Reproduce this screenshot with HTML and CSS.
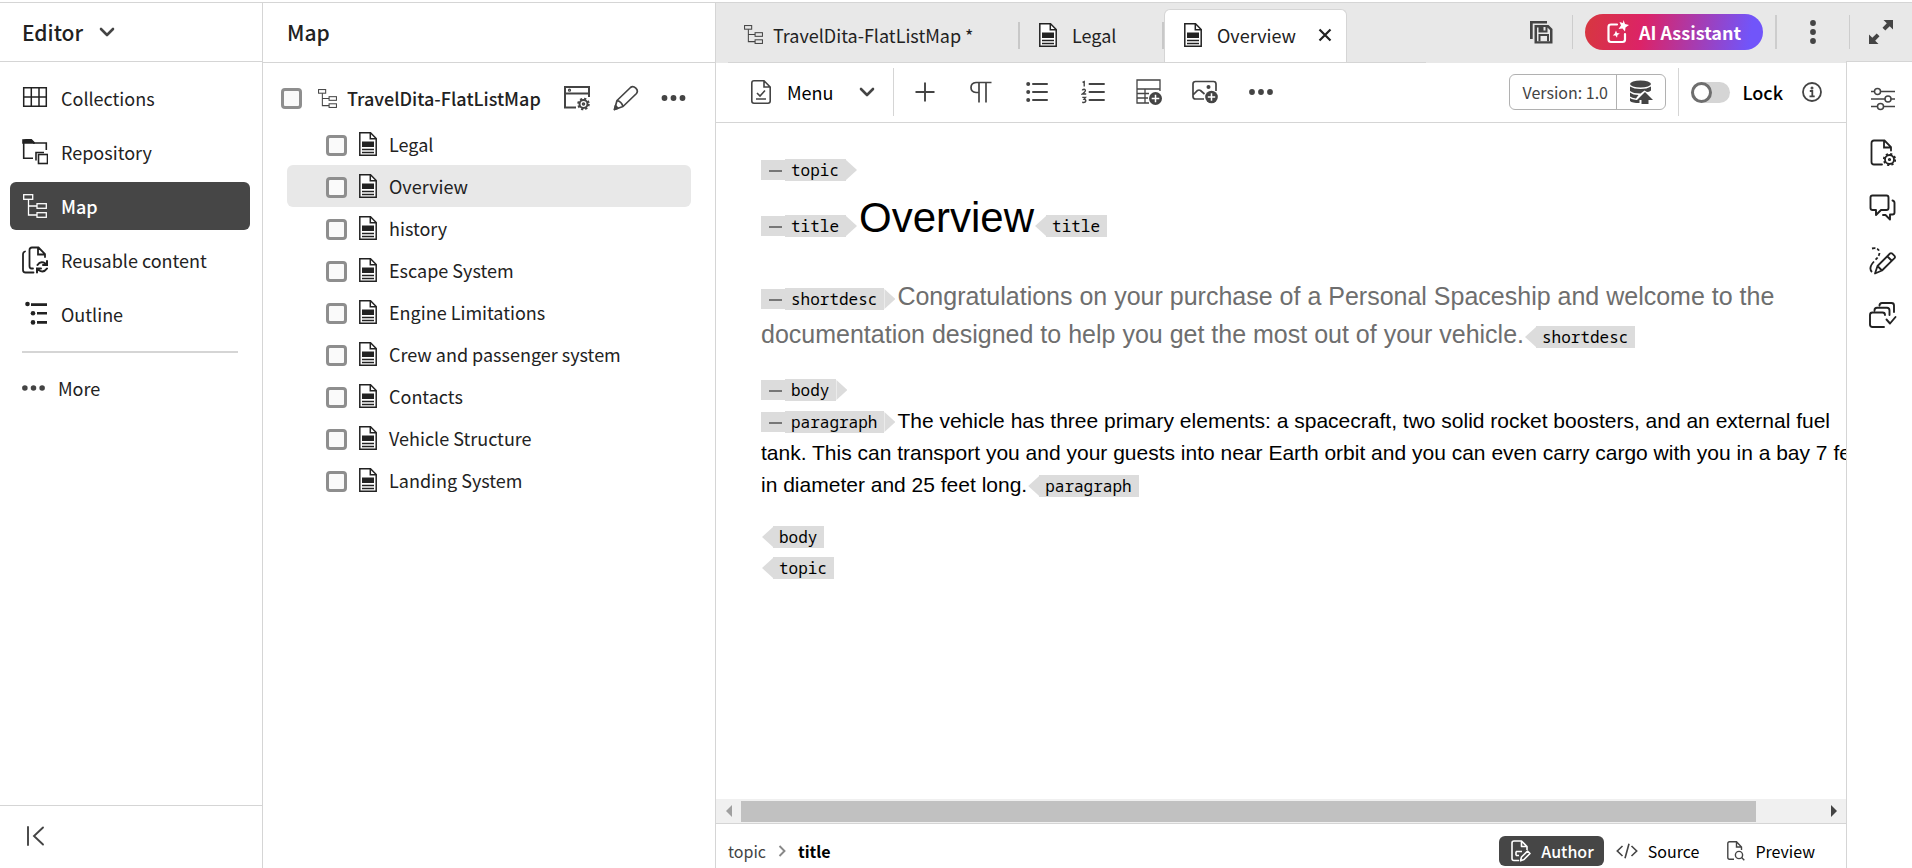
FILE: index.html
```html
<!DOCTYPE html>
<html lang="en">
<head>
<meta charset="utf-8">
<title>Editor</title>
<link rel="stylesheet" href="styles.css">
</head>
<body>
<svg class="sprite" aria-hidden="true">
  <symbol id="tree" viewBox="0 0 24 24"><g fill="none" stroke="currentColor" stroke-width="1.3"><rect x=".7" y=".7" width="9" height="4.6"/><rect x="14" y="9.7" width="9.3" height="4.6"/><rect x="14" y="18.7" width="9.3" height="4.6"/><path d="M5.5 5.3V21H14M5.5 12H14"/></g></symbol>
  <symbol id="doc" viewBox="0 0 18 24"><path d="M.8.8H11.500L17.200 6.500V23.200H.8Z" fill="#fff" stroke="#222" stroke-width="1.500"/><path d="M11.300.8V6.700H17.200" fill="none" stroke="#222" stroke-width="1.500"/><path d="M3 9.500H15V15H3Z" fill="#222"/><path d="M3 17.500H15M3 20.500H15" stroke="#222" stroke-width="1.300"/></symbol>
  <symbol id="chev" viewBox="0 0 16 10"><path d="M2 2L8 8L14 2" fill="none" stroke="currentColor" stroke-width="2.600" stroke-linecap="round" stroke-linejoin="round"/></symbol>
  <symbol id="dots" viewBox="0 0 24 6"><g fill="currentColor"><circle cx="3" cy="3" r="2.900"/><circle cx="12" cy="3" r="2.900"/><circle cx="21" cy="3" r="2.900"/></g></symbol>
</svg>
<div class="app">
  <aside class="nav">
    <header class="nav-head"><button class="product">Editor <svg width="16" height="10"><use href="#chev"/></svg></button></header>
    <nav class="nav-list">
      <button class="nav-item"><svg width="26" height="26" viewBox="0 0 26 26" fill="none" stroke="currentColor" stroke-width="1.500"><path d="M1.700 2.700H24.300V21.300H1.700ZM9.300 2.700V21.300M17 2.700V21.300M1.700 12H24.300"/></svg>Collections</button>
      <button class="nav-item"><svg width="26" height="26" viewBox="0 0 26 26" fill="none" stroke="currentColor" stroke-width="1.600"><path d="M1 1L9 .5L12 3.500V4H1Z" fill="currentColor"/><path d="M1.700 3V19.200H11M11 4H24.300V11M14 21.500V13.500H22"/><rect x="16.500" y="15.500" width="9" height="9"/></svg>Repository</button>
      <button class="nav-item active"><svg width="26" height="24"><use href="#tree"/></svg>Map</button>
      <button class="nav-item"><svg width="26" height="28" viewBox="0 0 26 28" fill="none" stroke="currentColor" stroke-width="1.800" stroke-linecap="round"><path d="M3 5.500Q1 6 1 8.500V24Q1 26.500 3.500 26.500H11.500M11 22.500H9.500Q7.500 22.500 7.500 20V4Q7.500 1.500 10 1.500H16.500L23 8V11M16 2V8.500H23"/><path d="M15.500 19Q18.500 14.500 23.500 17.500M25 15V19H21M25 22.500Q21.500 27.500 16.500 24M15 26.500V22.500H19" stroke-width="2"/></svg>Reusable content</button>
      <button class="nav-item"><svg width="26" height="26" viewBox="0 0 26 26" fill="currentColor"><circle cx="5.500" cy="3" r="2.300"/><circle cx="11" cy="12.200" r="2.300"/><circle cx="11" cy="21.400" r="2.300"/><path d="M9 2.200H25V5H9ZM15 10.900H25V13.600H15ZM15 20H25V22.800H15Z"/></svg>Outline</button>
      <hr class="nav-rule">
      <button class="nav-item more"><svg width="23" height="6"><use href="#dots"/></svg>More</button>
    </nav>
    <footer class="nav-foot"><button class="icon-btn" aria-label="Collapse"><svg width="20" height="20" viewBox="0 0 20 20" fill="none" stroke="#444" stroke-width="1.900" stroke-linecap="round"><path d="M2 1V19M17 1.500L8 10L17 18.500"/></svg></button></footer>
  </aside>

  <section class="map">
    <h2 class="map-head">Map</h2>
    <div class="root-row">
      <input class="check" type="checkbox" id="root"><svg width="19" height="19" class="root-icon"><use href="#tree"/></svg>
      <label class="root-name" for="root">TravelDita-FlatListMap</label>
      <button class="icon-btn" aria-label="Map settings"><svg width="28" height="26" viewBox="0 0 28 26" fill="none" stroke="#444" stroke-width="2"><path d="M13 22.500H2V2H26V12M2 8.500H26"/><circle cx="6.500" cy="5.200" r=".6"/><circle cx="20.500" cy="19" r="4"/><circle cx="20.500" cy="19" r="5.300" stroke-width="2" stroke-dasharray="2.200 1.960"/><circle cx="20.500" cy="19" r=".8"/></svg></button>
      <button class="icon-btn" aria-label="Edit"><svg width="26" height="26" viewBox="0 0 26 26" fill="none" stroke="#444" stroke-width="1.700" stroke-linejoin="round"><path d="M1.500 24.500L4 15.500L17.500 2.500Q20 .5 22.800 3.200Q25.500 6 23.500 8.500L10 21.500ZM4 15.500Q8.500 16.500 10 21.500"/><path d="M1.500 24.500L2.500 20.500L5 23.300Z" fill="#444"/></svg></button>
      <button class="icon-btn" aria-label="Options"><svg width="25" height="6"><use href="#dots"/></svg></button>
    </div>
    <ul class="tree">
      <li class="node"><input class="check" type="checkbox" id="n1"><label for="n1"><svg width="18" height="24"><use href="#doc"/></svg>Legal</label></li>
      <li class="node selected"><input class="check" type="checkbox" id="n2"><label for="n2"><svg width="18" height="24"><use href="#doc"/></svg>Overview</label></li>
      <li class="node"><input class="check" type="checkbox" id="n3"><label for="n3"><svg width="18" height="24"><use href="#doc"/></svg>history</label></li>
      <li class="node"><input class="check" type="checkbox" id="n4"><label for="n4"><svg width="18" height="24"><use href="#doc"/></svg>Escape System</label></li>
      <li class="node"><input class="check" type="checkbox" id="n5"><label for="n5"><svg width="18" height="24"><use href="#doc"/></svg>Engine Limitations</label></li>
      <li class="node"><input class="check" type="checkbox" id="n6"><label for="n6"><svg width="18" height="24"><use href="#doc"/></svg>Crew and passenger system</label></li>
      <li class="node"><input class="check" type="checkbox" id="n7"><label for="n7"><svg width="18" height="24"><use href="#doc"/></svg>Contacts</label></li>
      <li class="node"><input class="check" type="checkbox" id="n8"><label for="n8"><svg width="18" height="24"><use href="#doc"/></svg>Vehicle Structure</label></li>
      <li class="node"><input class="check" type="checkbox" id="n9"><label for="n9"><svg width="18" height="24"><use href="#doc"/></svg>Landing System</label></li>
    </ul>
  </section>

  <main class="editor">
    <div class="tabbar">
      <div class="tabs">
        <button class="tab tab-map"><svg width="19" height="19"><use href="#tree"/></svg>TravelDita-FlatListMap *</button>
        <button class="tab tab-legal"><svg width="18" height="24"><use href="#doc"/></svg>Legal</button>
        <div class="tab tab-current"><svg width="18" height="24"><use href="#doc"/></svg>Overview<button class="icon-btn close" aria-label="Close tab"><svg width="14" height="14" viewBox="0 0 14 14" fill="none" stroke="#222" stroke-width="2.200"><path d="M1.500 1.500L12.500 12.500M12.500 1.500L1.500 12.500"/></svg></button></div>
      </div>
      <div class="top-actions">
        <button class="icon-btn act-save" aria-label="Save all"><svg width="24" height="24" viewBox="0 0 24 24"><path d="M1 1H18V3.500H3.700V19H1Z" fill="#444"/><path d="M5.500 5H19.500L23.500 9V23.500H5.500Z" fill="#444"/><path d="M8 7.500H9.500V12.500H18.500V7.500L21 10V21.200H8Z" fill="#e8e8e8"/><path d="M14.500 7H16.500V10.500H14.500Z" fill="#e8e8e8"/><path d="M9.500 14H20V21.200H18V16H11.500V21.200H9.500Z" fill="#444"/></svg></button>
        <div class="act-ai"><button class="ai"><svg width="22" height="24" viewBox="0 0 22 24" fill="none" stroke="#fff" stroke-width="2.200" stroke-linecap="round"><path d="M10 4.500H4Q1.500 4.500 1.500 7V19.500Q1.500 22 4 22H15.500Q18 22 18 19.500V14"/><path d="M16.500 0L18 4L22 5L18.500 7.500L18 11.500L15.500 8.500L11.500 9L14 5.500L12.500 2L16 3ZM9 10.500L10 13L12.800 13.500L10.500 15L10 17.800L8.500 15.500L5.800 15.500L7.800 13.500Z" fill="#fff" stroke="none"/></svg>AI Assistant</button></div>
        <button class="icon-btn act-more" aria-label="More"><svg width="6" height="24" viewBox="0 0 6 24" fill="#444"><circle cx="3" cy="3" r="2.900"/><circle cx="3" cy="12" r="2.900"/><circle cx="3" cy="21" r="2.900"/></svg></button>
        <button class="icon-btn act-full" aria-label="Full screen"><svg width="26" height="26" viewBox="0 0 26 26" fill="#444"><path d="M15.500 1H25V10.500L21.700 7.200L17.300 11.500L14.500 8.700L18.800 4.300ZM10.500 25H1V15.500L4.300 18.800L8.700 14.500L11.500 17.300L7.200 21.700Z"/></svg></button>
      </div>
    </div>

    <div class="work">
      <div class="pane">
        <div class="toolbar">
          <button class="menu-btn"><svg width="20" height="24" viewBox="0 0 20 24" fill="none" stroke="#444" stroke-width="1.600"><path d="M3 .8H13L19.200 7V21Q19.200 23.200 17 23.200H3Q.8 23.200 .8 21V3Q.8.8 3 .8ZM13 1V7H19M6 13L9 16L14 10.500M5 19H15"/></svg><span>Menu</span><svg width="16" height="10"><use href="#chev"/></svg></button>
          <div class="tools">
            <button class="icon-btn" aria-label="Insert element"><svg width="20" height="20" viewBox="0 0 20 20" stroke="#444" stroke-width="1.900"><path d="M10 .5V19.500M.5 10H19.500"/></svg></button>
            <button class="icon-btn" aria-label="Paragraph"><svg width="22" height="22" viewBox="0 0 22 22" fill="none" stroke="#444" stroke-width="1.700"><path d="M21.500 1.500H6Q1 2 1 6.500Q1 11 6 11.500H9M9 1.500V21.500M16 1.500V21.500"/></svg></button>
            <button class="icon-btn" aria-label="Bulleted list"><svg width="22" height="22" viewBox="0 0 22 22"><g fill="#444"><circle cx="2.200" cy="3" r="2"/><circle cx="2.200" cy="11" r="2"/><circle cx="2.200" cy="19" r="2"/></g><path d="M7 3H21M7 11H21M7 19H21" stroke="#444" stroke-width="2" stroke-linecap="round"/></svg></button>
            <button class="icon-btn" aria-label="Numbered list"><svg width="24" height="24" viewBox="0 0 24 24" fill="none" stroke="#444"><path d="M8.500 4H23M8.500 12H23M8.500 20H23" stroke-width="1.900" stroke-linecap="round"/><path d="M1.500 2.300L3.200 1.500V6.500M1.300 10.300Q1.500 9.300 3 9.300Q4.700 9.500 4.300 11Q3.500 12.500 1.300 14H5.200M1.300 17.400H4.500L3 19.300Q5 19.500 4.800 21Q4.300 23 1.200 22.300" stroke-width="1.400"/></svg></button>
            <button class="icon-btn" aria-label="Insert table"><svg width="26" height="26" viewBox="0 0 26 26"><path d="M13 24H1V1H24V12M1 10H24M1 14.500H13M1 19H12M9 10V24" fill="none" stroke="#444" stroke-width="1.300"/><circle cx="19.500" cy="19.500" r="6.500" fill="#444"/><path d="M19.500 15.700V23.300M15.700 19.500H23.300" stroke="#fff" stroke-width="1.500"/></svg></button>
            <button class="icon-btn" aria-label="Insert image"><svg width="26" height="24" viewBox="0 0 26 24"><path d="M12 19H3.500Q1 19 1 16.500V4Q1 1.500 3.500 1.500H21.500Q24 1.500 24 4V11M1 15L5.500 10.500Q7 9.500 8.500 10.500L12.500 14" fill="none" stroke="#444" stroke-width="1.700"/><circle cx="16.500" cy="7" r="2" fill="#444"/><circle cx="19.500" cy="17" r="6.300" fill="#444"/><path d="M19.500 13.300V20.700M15.800 17H23.200" stroke="#fff" stroke-width="1.500"/></svg></button>
            <button class="icon-btn" aria-label="More tools"><svg width="24" height="6"><use href="#dots"/></svg></button>
          </div>
          <div class="version"><button class="ver-name">Version: 1.0</button><button class="ver-save" aria-label="Save as new version"><svg width="24" height="24" viewBox="0 0 24 24" fill="#444"><ellipse cx="11.500" cy="4" rx="10.500" ry="3.500"/><path d="M1 6.500Q5 9 11.500 9T22 6.500V10.500Q20 12 18 12L15.500 10.500L11.500 13.500Q4 13.500 1 11ZM1 12.500Q4 15 9.500 15L7 18.500Q3 18 1 16.500ZM1 18Q4 20 10.500 20V23Q3 23 1 21ZM16 12L24 20H19.500V24H12.500V20H8Z"/></svg></button></div>
          <div class="lock"><input class="switch" type="checkbox" role="switch" id="lock"><label for="lock">Lock</label><button class="icon-btn" aria-label="Lock info"><svg width="20" height="20" viewBox="0 0 20 20" fill="none" stroke="#444" stroke-width="1.800"><circle cx="10" cy="10" r="9"/><path d="M7.800 9H10.300V14M7.500 14.300H12.700"/><circle cx="10" cy="6" r=".6"/></svg></button></div>
        </div>

        <div class="canvas">
          <article class="topic">
            <div class="line"><span class="tag open"><i class="fold"></i><code>topic</code></span></div>
            <h1 class="title"><span class="tag open"><i class="fold"></i><code>title</code></span>Overview<span class="tag end"><code>title</code></span></h1>
            <p class="shortdesc"><span class="tag open"><i class="fold"></i><code>shortdesc</code></span>Congratulations on your purchase of a Personal Spaceship and welcome to the documentation designed to help you get the most out of your vehicle.<span class="tag end"><code>shortdesc</code></span></p>
            <div class="line"><span class="tag open"><i class="fold"></i><code>body</code></span></div>
            <p class="para"><span class="tag open"><i class="fold"></i><code>paragraph</code></span>The vehicle has three primary elements: a spacecraft, two solid rocket boosters, and an external fuel tank. This can transport you and your guests into near Earth orbit and you can even carry cargo with you in a bay 7 feet in diameter and 25 feet long.<span class="tag end"><code>paragraph</code></span></p>
            <div class="line"><span class="tag end"><code>body</code></span></div>
            <div class="line"><span class="tag end"><code>topic</code></span></div>
          </article>
        </div>

        <div class="scroll">
          <button class="icon-btn" aria-label="Scroll left"><svg width="8" height="12" viewBox="0 0 8 12" fill="#a0a0a0"><path d="M7 0V12L1 6Z"/></svg></button>
          <div class="track"><div class="thumb"></div></div>
          <button class="icon-btn" aria-label="Scroll right"><svg width="8" height="12" viewBox="0 0 8 12" fill="#444"><path d="M1 0V12L7 6Z"/></svg></button>
        </div>

        <footer class="status">
          <nav class="crumbs"><a href="#topic">topic</a><svg width="8" height="12" viewBox="0 0 8 12" fill="none" stroke="#888" stroke-width="1.900"><path d="M1.500 1L6.500 6L1.500 11"/></svg><a href="#title" class="here">title</a></nav>
          <div class="modes">
            <button class="mode on"><svg width="20" height="22" viewBox="0 0 20 22" fill="none" stroke="currentColor" stroke-width="1.600" stroke-linejoin="round"><path d="M8 20.500H3Q1 20.500 1 18.500V3Q1 1 3 1H10.500L16 6.500V10M10.500 1V6.500H16M5 11.500H11M5 15.500H8M5 11.500V15.500M9.500 20.800L10.500 17L16.500 11.200L19 13.500L13 19.500Z"/></svg>Author</button>
            <button class="mode"><svg width="22" height="16" viewBox="0 0 22 16" fill="none" stroke="#444" stroke-width="1.600"><path d="M6.500 3L1.300 8L6.500 13M15.500 3L20.700 8L15.500 13M13 .8L9 15.200"/></svg>Source</button>
            <button class="mode preview"><svg width="18" height="20" viewBox="0 0 18 20" fill="none" stroke="#444" stroke-width="1.400"><path d="M7 18.300H2.500Q.8 18.300 .8 16.500V2.500Q.8.8 2.500.8H9.500L14.500 6V9M9.500.8V6H14.500"/><circle cx="12" cy="14" r="3.600"/><path d="M14.600 16.600L17.300 19.300"/></svg>Preview</button>
          </div>
        </footer>
      </div>

      <aside class="rail">
        <button class="icon-btn" aria-label="Content properties"><svg width="26" height="24" viewBox="0 0 26 24" fill="none" stroke="#444" stroke-width="1.500"><path d="M1 4.500H4.500M10.500 4.500H25M1 12H15M21 12H25M1 19.500H7.500M13.500 19.500H25"/><circle cx="7.500" cy="4.500" r="3"/><circle cx="18" cy="12" r="3"/><circle cx="10.500" cy="19.500" r="3"/></svg></button>
        <button class="icon-btn" aria-label="File properties"><svg width="26" height="28" viewBox="0 0 26 28" fill="none" stroke="#222" stroke-width="1.800" stroke-linecap="round"><path d="M12 25.500H4Q1.500 25.500 1.500 23V4Q1.500 1.500 4 1.500H14.500L21 8V11.500M14 2V8.500H21"/><circle cx="19.500" cy="20.500" r="4.500"/><circle cx="19.500" cy="20.500" r="5.700" stroke-width="1.800" stroke-linecap="butt" stroke-dasharray="2.200 2.280"/><circle cx="19.500" cy="20.500" r=".7"/></svg></button>
        <button class="icon-btn" aria-label="Comments"><svg width="27" height="27" viewBox="0 0 27 27" fill="none" stroke="#222" stroke-width="1.900" stroke-linejoin="round" stroke-linecap="round"><path d="M3.500 1.500H17.500Q19.500 1.500 19.500 3.500V14Q19.500 16 17.500 16H12L7 21V16H3.500Q1.500 16 1.500 14V3.500Q1.500 1.500 3.500 1.500ZM23.500 6.500Q25.500 7 25.500 9V18.500Q25.500 20.500 23.500 20.500H21V25.500L16.500 21H14"/></svg></button>
        <button class="icon-btn" aria-label="Suggestions"><svg width="27" height="28" viewBox="0 0 27 28" fill="none" stroke="#222" stroke-width="1.800" stroke-linejoin="round"><path d="M6 26.500L8.500 19L21 6.500Q22 5.500 23.500 6.800L25.500 8.800Q26.500 10 25.500 11.200L13 23.500ZM8.500 19L13 23.500M18.500 9.500L22.500 13.500"/><path d="M3 1.500Q10 0 10.500 6Q10 10 5.500 13.500" stroke-dasharray="3 2"/><path d="M5 14.500Q-1 21 3 25"/></svg></button>
        <button class="icon-btn" aria-label="Tasks"><svg width="28" height="27" viewBox="0 0 28 27" fill="none" stroke="#222" stroke-width="1.900" stroke-linejoin="round" stroke-linecap="round"><path d="M15 25H3.500Q1 25 1 22.500V13Q1 10.500 3.500 10.500H13.500Q16 10.500 16 13M5.500 8.500Q5.500 5.700 8 5.700H18Q20.500 5.700 20.500 8.500V13M10.500 3.500Q10.500 1 13 1H22.500Q25 1 25 3.500V10M17.500 17.500L21 21.500L26.500 15"/></svg></button>
      </aside>
    </div>
  </main>
</div>
</body>
</html>
```
FILE: styles.css
```css
* { box-sizing: border-box; }
body {
  margin: 0;
  color: #222;
  background: #fff;
  font: 18px/24px "Noto Sans CJK SC", "Noto Sans", sans-serif;
}
button {
  font: inherit;
  color: inherit;
  background: none;
  border: 0;
  padding: 0;
  display: flex;
  align-items: center;
  white-space: nowrap;
}
svg { display: block; flex: none; }
.sprite { position: absolute; width: 0; height: 0; }
.icon-btn { justify-content: center; color: #444; flex: none; }

.app {
  display: grid;
  grid-template-columns: 263px 453px minmax(0, 1fr);
  height: 100vh;
  padding-top: 2px;
}
.app > * { border-top: 1px solid #d5d5d5; }

/* Left navigation */
.nav {
  display: flex;
  flex-direction: column;
  border-right: 1px solid #d5d5d5;
}
.nav-head {
  height: 59px;
  padding: 0 22px;
  display: flex;
  border-bottom: 1px solid #d5d5d5;
}
.product { gap: 16px; font-size: 21px; font-weight: 500; }
.product svg { color: #444; }
.nav-list {
  display: flex;
  flex-direction: column;
  gap: 6px;
  padding: 12px 12px 0 10px;
}
.nav-item { height: 48px; padding-left: 12px; gap: 13px; border-radius: 6px; }
.nav-item.active { background: #464646; color: #fff; font-weight: 500; }
.nav-item.more svg { color: #444; }
.nav-rule {
  height: 2px;
  width: auto;
  margin: 7px 12px 5px;
  border: 0;
  background: #d5d5d5;
}
.nav-foot {
  margin-top: auto;
  height: 63px;
  padding: 0 0 3px 26px;
  display: flex;
  border-top: 1px solid #d5d5d5;
}

/* Map panel */
.map { border-right: 1px solid #d5d5d5; }
.map-head {
  margin: 0;
  height: 60px;
  padding-left: 24px;
  font-size: 21px;
  font-weight: 500;
  line-height: 58px;
  border-bottom: 1px solid #d5d5d5;
}
.check {
  appearance: none;
  flex: none;
  width: 21px;
  height: 21px;
  margin: 0;
  border: 3px solid #8e8e8e;
  border-radius: 4px;
  background: #fafafa;
}
.root-row {
  display: flex;
  align-items: center;
  height: 50px;
  margin-top: 10px;
  padding: 0 29px 0 18px;
  gap: 22px;
}
.root-icon { margin: 0 -12px 0 -6px; color: #444; }
.root-name {
  flex: 1;
  overflow: hidden;
  white-space: nowrap;
  font-weight: 500;
}
.tree { list-style: none; margin: 0; padding: 0 24px; }
.node {
  display: flex;
  align-items: center;
  gap: 12px;
  height: 42px;
  padding: 2px 0 0 39px;
  border-radius: 6px;
}
.node.selected { background: #e8e8e8; }
.node label { display: flex; gap: 12px; align-items: center; padding-bottom: 2px; }

/* Tab bar */
.editor { display: flex; flex-direction: column; }
.tabbar {
  display: flex;
  justify-content: space-between;
  height: 60px;
  background: #e8e8e8;
}
.tabs {
  display: flex;
  align-items: flex-end;
  flex: none;
  width: 698px;
  margin-left: 12px;
  border-bottom: 1px solid #d5d5d5;
}
.tab { display: flex; align-items: center; height: 53px; padding-bottom: 2px; white-space: nowrap; }
.tab-map { gap: 10px; width: 292px; padding-left: 16px; }
.tab-map svg { color: #444; }
.tab-legal { gap: 15px; flex: none; width: 144px; padding-left: 19px; }
.tab-map, .tab-legal {
  background: linear-gradient(#c8c8c8, #c8c8c8) no-repeat right center / 2px 27px;
}
.tab-current {
  gap: 15px;
  height: 53px;
  width: 183px;
  padding: 0 14px 2px 19px;
  background: #fff;
  border: solid #d5d5d5;
  border-width: 1px 1px 0;
  border-radius: 6px 6px 0 0;
}
.close { margin-left: auto; }
.top-actions { display: flex; align-items: center; flex: none; padding-bottom: 3px; }
.top-actions > * { height: 34px; display: flex; align-items: center; }
.act-save { padding-right: 19px; }
.act-ai {
  border: solid #cdcdcd;
  border-width: 0 2px 0 1px;
  padding: 0 12px;
}
.act-more { width: 73px; border-right: 1px solid #cdcdcd; }
.act-full { width: 62px; }
.ai {
  gap: 10px;
  height: 36px;
  width: 178px;
  justify-content: center;
  border-radius: 18px;
  color: #fff;
  font-weight: 700;
  background: linear-gradient(100deg, #d7373f 0%, #dc2367 33%, #7155fa 92%);
}

/* Work area */
.work { display: flex; flex: 1; min-height: 0; }
.pane { display: flex; flex-direction: column; flex: 1; min-width: 0; }
.toolbar {
  display: flex;
  align-items: center;
  flex: none;
  height: 60px;
  padding-bottom: 1px;
  border-bottom: 1px solid #d5d5d5;
}
.menu-btn {
  height: 48px;
  padding: 0 18px 0 35px;
  gap: 25px;
  border-right: 1px solid #d5d5d5;
}
.menu-btn span { margin-left: -9px; color: #000; }
.menu-btn svg { color: #444; }
.tools { display: flex; flex: 1; padding-left: 3px; }
.tools .icon-btn { width: 56px; height: 48px; }
.version {
  display: flex;
  height: 36px;
  margin-right: 12px;
  border: 1px solid #b1b1b1;
  border-radius: 6px;
  color: #444;
  font-size: 16px;
}
.ver-name { padding: 0 12px; width: 106px; }
.ver-save { width: 49px; justify-content: center; border-left: 1px solid #b1b1b1; }
.lock {
  display: flex;
  align-items: center;
  gap: 12px;
  height: 48px;
  padding: 0 24px 0 12px;
  border-left: 1px solid #d5d5d5;
  font-weight: 500;
  color: #000;
}
.lock .icon-btn { margin-left: 7px; }
.switch {
  appearance: none;
  display: flex;
  width: 39px;
  height: 21px;
  margin: 0;
  border-radius: 11px;
  background: #d5d5d5;
}
.switch::before {
  content: "";
  width: 21px;
  height: 21px;
  border: 3px solid #6e6e6e;
  border-radius: 50%;
  background: #fff;
  box-sizing: border-box;
}

/* Authoring canvas */
.canvas { flex: 1; min-height: 0; overflow: hidden; }
.topic {
  min-width: 1202px;
  padding: 31px 45px 0;
  color: #000;
  font: 20px/31px "Liberation Sans", Arial, sans-serif;
}
.topic p, .topic h1 { margin: 0; font-weight: 400; }
.topic .title { margin: 9px 0 35px; font-size: 42px; line-height: 48px; }
.topic .shortdesc { margin-bottom: 21px; font-size: 25px; line-height: 38px; color: #6e6e6e; }
.topic .para { margin-bottom: 20px; font-size: 21px; line-height: 32px; }
.line { height: 31px; }
.tag { display: inline-flex; align-items: baseline; color: #000; }
.tag code {
  height: 22px;
  padding: 0 7px 0 6px;
  background: #dcdcdc;
  font: 16px/22px "Noto Sans Mono", "DejaVu Sans Mono", monospace;
}
.tag.open { margin-right: 2px; }
.tag.end { margin-left: 1px; }
.tag.open::after, .tag.end::before {
  content: "";
  align-self: center;
  width: 11px;
  height: 20px;
  background: #dcdcdc;
}
.tag.open::after { clip-path: polygon(0 0, 100% 50%, 0 100%); }
.tag.end::before { clip-path: polygon(100% 0, 0 50%, 100% 100%); }
.fold {
  align-self: center;
  width: 24px;
  height: 20px;
  background: linear-gradient(#777, #777) no-repeat 8px 10px / 13px 2px #dcdcdc;
}

.scroll {
  display: flex;
  flex: none;
  height: 25px;
  border-bottom: 1px solid #d5d5d5;
  background: #f0f0f0;
}
.scroll .icon-btn { width: 25px; }
.track { flex: 1; padding: 2px 0 1px; }
.thumb { width: 94%; height: 100%; background: #c1c1c1; }

.status {
  display: flex;
  align-items: center;
  justify-content: space-between;
  flex: none;
  height: 44px;
  padding: 10px 31px 0 12px;
  font-size: 16px;
}
.crumbs { display: flex; align-items: center; gap: 12px; }
.crumbs a { color: #444; text-decoration: none; }
.crumbs .here { color: #000; font-weight: 700; }
.modes { display: flex; align-self: flex-start; margin-top: 2px; }
.mode { height: 30px; gap: 10px; padding: 0 12px; color: #000; }
.mode.on { padding: 0 10px 0 12px; background: #464646; color: #fff; font-weight: 500; border-radius: 6px; }
.mode.preview { padding: 0 0 0 16px; }

.rail {
  display: flex;
  flex-direction: column;
  flex: none;
  width: 66px;
  margin-top: -2px;
  padding: 10px 0 0 6px;
  border: solid #d5d5d5;
  border-width: 1px 0 0 1px;
  background: #fff;
}
.rail .icon-btn { height: 54px; }
```
